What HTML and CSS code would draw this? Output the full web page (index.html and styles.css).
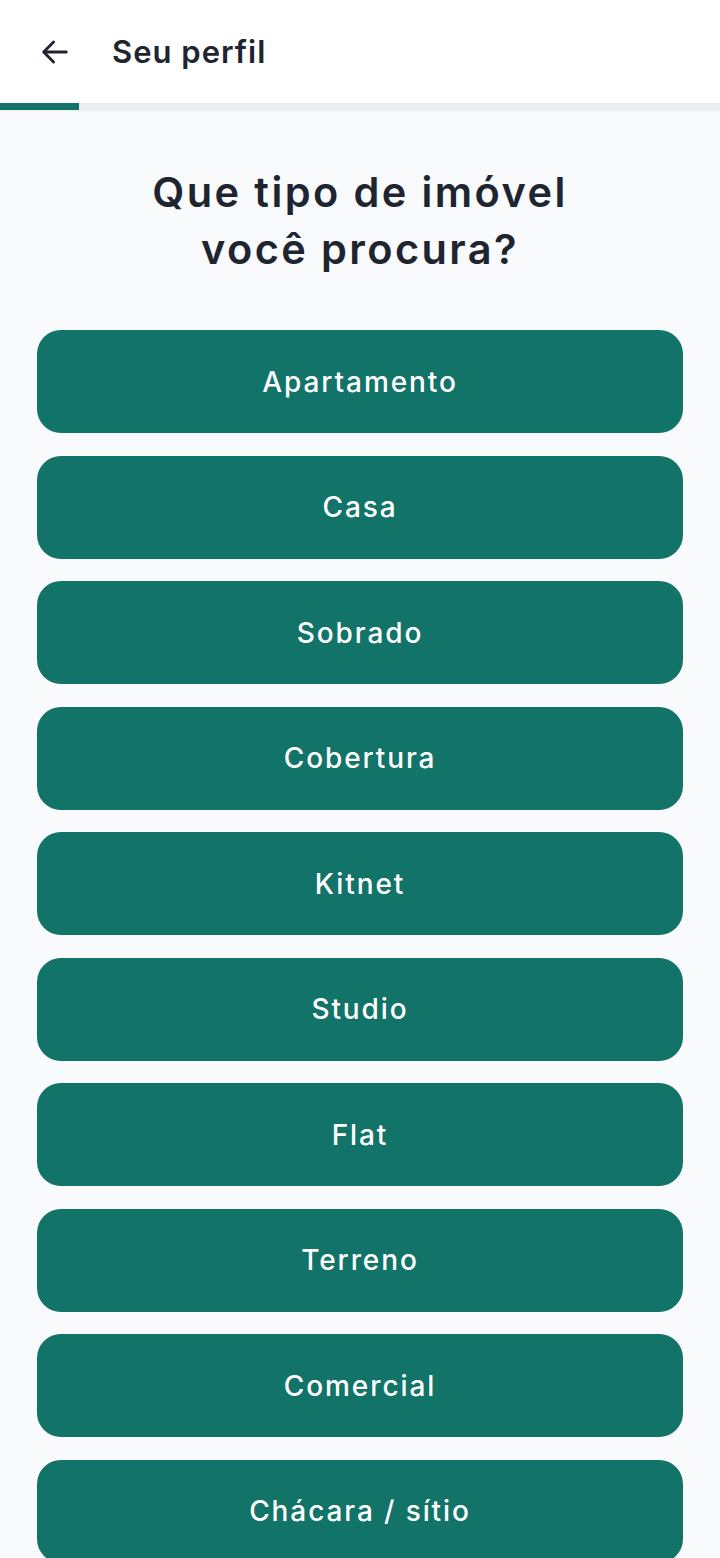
FILE: index.html
```html
<!DOCTYPE html>
<html lang="pt-BR">
<head>
<meta charset="utf-8">
<link rel="stylesheet" href="styles.css">
</head>
<body>
<header class="topbar">
  <div class="topbar-row">
    <button class="back" aria-label="Voltar">
      <svg width="34" height="34" viewBox="0 0 24 24" fill="none" stroke="#1e2530" stroke-width="2" stroke-linecap="round" stroke-linejoin="round"><path d="M20 12H4.5"/><path d="M11 5l-7 7 7 7"/></svg>
    </button>
    <h1 class="topbar-title">Seu perfil</h1>
  </div>
  <div class="progress"><div class="progress-fill" style="width: 79px"></div></div>
</header>
<main class="content">
  <h2 class="question">Que tipo de imóvel<br>você procura?</h2>
  <div class="options">
    <button class="option">Apartamento</button>
    <button class="option">Casa</button>
    <button class="option">Sobrado</button>
    <button class="option">Cobertura</button>
    <button class="option">Kitnet</button>
    <button class="option">Studio</button>
    <button class="option">Flat</button>
    <button class="option">Terreno</button>
    <button class="option">Comercial</button>
    <button class="option">Chácara / sítio</button>
  </div>
</main>
</body>
</html>
```
FILE: styles.css
```css
* { box-sizing: border-box; }
html, body { margin: 0; padding: 0; }
body {
  background: #f8fafc;
  font-family: "Inter", "DejaVu Sans", sans-serif;
  color: #1e2530;
  height: 1558px;
  overflow: hidden;
}
.topbar { background: #ffffff; }
.topbar-row {
  height: 103px;
  display: flex;
  align-items: center;
  padding-left: 38px;
}
.back {
  border: 0;
  background: none;
  padding: 0;
  width: 34px;
  height: 34px;
  display: flex;
  margin-right: 40px;
}
.topbar-title {
  margin: 0;
  font-size: 31px;
  font-weight: 600;
  letter-spacing: 1px;
  color: #1e2530;
}
.progress {
  height: 7px;
  background: #e9eef0;
  box-shadow: 0 1px 2px rgba(0,0,0,0.06);
}
.progress-fill { height: 100%; background: #127369; }
.content { padding: 0 37px; }
.question {
  margin: 54px 0 52px;
  text-align: center;
  font-size: 41.5px;
  line-height: 57px;
  font-weight: 600;
  letter-spacing: 2.4px;
  color: #1e2530;
}
.options {
  display: flex;
  flex-direction: column;
  gap: 22.5px;
}
.option {
  height: 103px;
  border: 0;
  border-radius: 24px;
  background: #127369;
  color: #ffffff;
  font-family: "Inter", "DejaVu Sans", sans-serif;
  font-size: 28px;
  font-weight: 500;
  letter-spacing: 1.9px;
  padding: 0;
  flex-shrink: 0;
}
```
